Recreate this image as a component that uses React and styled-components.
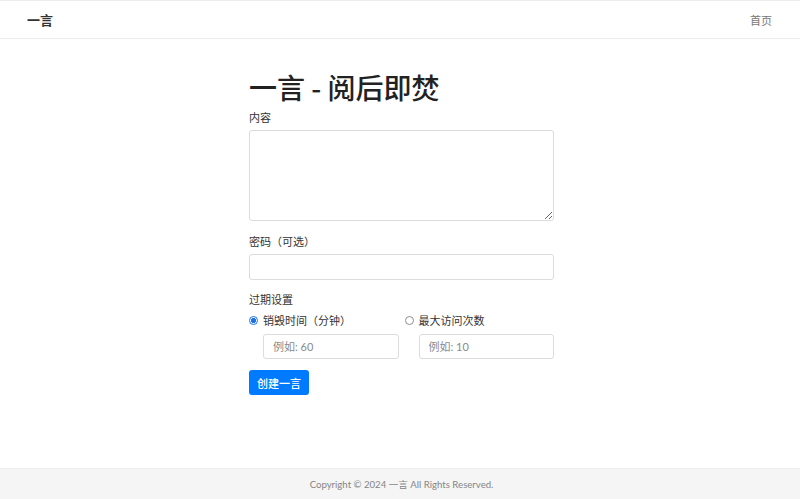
import React from "react";
import styled, { createGlobalStyle } from "styled-components";

const Global = createGlobalStyle`
  html, body { margin: 0; padding: 0; }
  body {
    font-family: Lato, "Noto Sans CJK SC", sans-serif;
    color: #212529;
    background: #fff;
  }
  * { box-sizing: border-box; }
`;

const Page = styled.div`
  min-height: 100vh;
  display: flex;
  flex-direction: column;
`;

const Nav = styled.nav`
  height: 39px;
  border-top: 1px solid #ececec;
  border-bottom: 1px solid #ececec;
  display: flex;
  align-items: center;
  justify-content: space-between;
  padding: 0 28px 0 27px;
`;

const Brand = styled.a`
  font-size: 13px;
  font-weight: 700;
  color: #333;
  text-decoration: none;
  font-family: "Noto Sans CJK SC", sans-serif;
`;

const NavLink = styled.a`
  font-size: 11px;
  color: #777;
  text-decoration: none;
  font-family: "Noto Sans CJK SC", sans-serif;
`;

const Main = styled.main`
  flex: 1;
  display: flex;
  justify-content: center;
  padding-top: 31px;
`;

const Container = styled.div`
  width: 305px;
  margin-left: 3px;
`;

const Title = styled.h1`
  font-size: 28px;
  font-weight: 500;
  line-height: 34px;
  margin: 0 0 5px;
  color: #222;
  font-family: "Noto Sans CJK SC", sans-serif;
`;

const Group = styled.div`
  margin-bottom: ${(p) => p.$mb ?? 12}px;
`;

const Label = styled.label`
  display: block;
  font-size: 11px;
  line-height: 16px;
  margin-bottom: 5px;
  color: #333;
  font-family: "Noto Sans CJK SC", sans-serif;
`;

const TextArea = styled.textarea`
  display: block;
  width: 100%;
  height: 91px;
  border: 1px solid #dcdcdc;
  border-radius: 3px;
  padding: 4px 8px;
  font-size: 11px;
  outline: none;
`;

const Input = styled.input`
  display: block;
  width: 100%;
  height: ${(p) => p.$h || 26}px;
  border: 1px solid #dcdcdc;
  border-radius: 3px;
  padding: 0 9px;
  font-size: 11px;
  font-family: Lato, "Noto Sans CJK SC", sans-serif;
  outline: none;
  &::placeholder { color: #8a8a8a; }
`;

const OptionGrid = styled.div`
  display: grid;
  grid-template-columns: 1fr 1fr;
  column-gap: 6px;
`;

const Option = styled.div`
  display: flex;
  flex-direction: column;
`;

const RadioLabel = styled.label`
  display: flex;
  align-items: center;
  height: 16px;
  font-size: 11px;
  color: #333;
  font-family: "Noto Sans CJK SC", sans-serif;
  margin-bottom: 6px;
`;

const Radio = styled.input.attrs({ type: "radio" })`
  appearance: none;
  width: 9px;
  height: 9px;
  margin: 0 5px 0 0;
  border-radius: 50%;
  border: 1px solid #8d8d8d;
  background: #fff;
  flex: none;
  &:checked {
    border-color: #1a73e8;
    background: radial-gradient(circle, #1a73e8 0 2.3px, #fff 2.6px);
  }
`;

const Indented = styled.div`
  padding-left: 14px;
`;

const Button = styled.button`
  height: 25px;
  padding: 0 8px;
  border: none;
  border-radius: 3px;
  background: #007bff;
  color: #fff;
  font-size: 11px;
  font-weight: 500;
  font-family: "Noto Sans CJK SC", sans-serif;
  cursor: pointer;
`;

const Footer = styled.footer`
  height: 31px;
  background: #f5f5f5;
  display: flex;
  align-items: center;
  justify-content: center;
  font-size: 9.6px;
  color: #858585;
  border-top: 1px solid #eeeeee;
  padding-left: 3px;
`;

export default function App() {
  return (
    <Page>
      <Global />
      <Nav>
        <Brand href="#">一言</Brand>
        <NavLink href="#">首页</NavLink>
      </Nav>
      <Main>
        <Container>
          <Title>一言 - 阅后即焚</Title>
          <Group>
            <Label>内容</Label>
            <TextArea />
          </Group>
          <Group $mb={11}>
            <Label>密码（可选）</Label>
            <Input type="password" />
          </Group>
          <Group $mb={11}>
            <Label>过期设置</Label>
            <OptionGrid>
              <Option>
                <RadioLabel>
                  <Radio name="exp" defaultChecked />
                  销毁时间（分钟）
                </RadioLabel>
                <Indented>
                  <Input $h={25} placeholder="例如: 60" />
                </Indented>
              </Option>
              <Option>
                <RadioLabel>
                  <Radio name="exp" />
                  最大访问次数
                </RadioLabel>
                <Indented>
                  <Input $h={25} placeholder="例如: 10" />
                </Indented>
              </Option>
            </OptionGrid>
          </Group>
          <Button>创建一言</Button>
        </Container>
      </Main>
      <Footer>Copyright © 2024 一言 All Rights Reserved.</Footer>
    </Page>
  );
}
